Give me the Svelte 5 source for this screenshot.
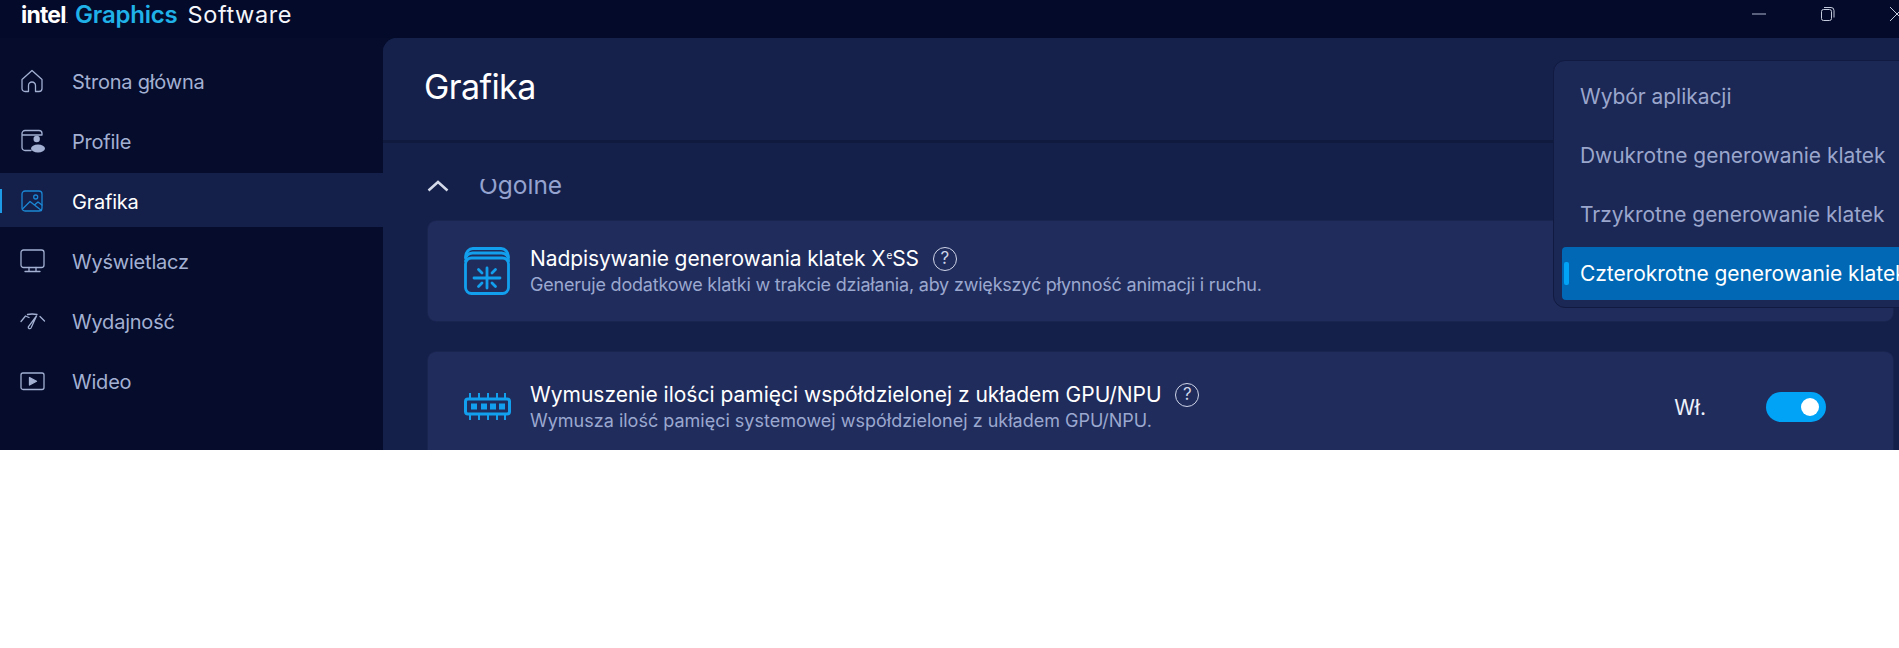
<script>
  const nav = [
    { label: 'Strona główna', icon: 'home' },
    { label: 'Profile', icon: 'profile' },
    { label: 'Grafika', icon: 'image', active: true },
    { label: 'Wyświetlacz', icon: 'monitor' },
    { label: 'Wydajność', icon: 'gauge' },
    { label: 'Wideo', icon: 'video' }
  ];
  const menu = ['Wybór aplikacji', 'Dwukrotne generowanie klatek', 'Trzykrotne generowanie klatek', 'Czterokrotne generowanie klatek'];
</script>

<div class="app">
  <header class="titlebar">
    <div class="brand">
      <span class="intel">intel</span><sup class="tm">.</sup>
      <span class="graphics">Graphics</span>
      <span class="software">Software</span>
    </div>
    <div class="winctl">
      <svg width="16" height="16" viewBox="0 0 16 16"><path d="M1 8h14" stroke="#aeb6cc" stroke-width="1"/></svg>
      <svg width="16" height="16" viewBox="0 0 16 16" fill="none" stroke="#c4cbdc" stroke-width="1"><rect x="1.5" y="3.5" width="10" height="11" rx="2"/><path d="M4 1.500h7a3 3 0 0 1 3 3v7"/></svg>
      <svg width="16" height="16" viewBox="0 0 16 16" fill="none" stroke="#c4cbdc" stroke-width="1"><path d="M1 1l14 14M15 1L1 15"/></svg>
    </div>
  </header>

  <div class="body">
    <nav class="sidebar">
      {#each nav as item}
        <div class="item" class:active={item.active}>
          <svg class="nicon" width="24" height="24" viewBox="0 0 24 24" fill="none" stroke="currentColor" stroke-width="1.3" stroke-linejoin="round" stroke-linecap="round">
            {#if item.icon === 'home'}
              <path d="M2 10.500 12 1.500l10 9v9a3 3 0 0 1-3 3h-3.500v-6a3.500 3.500 0 0 0-7 0v6H5a3 3 0 0 1-3-3z"/>
            {:else if item.icon === 'profile'}
              <path d="M11 21.500H5a3 3 0 0 1-3-3V4.500a3 3 0 0 1 3-3h14a3 3 0 0 1 3 3v1.500M2 6h20"/>
              <circle cx="16.700" cy="10" r="3.200" fill="currentColor" stroke="none"/>
              <ellipse cx="18" cy="19.500" rx="7" ry="4" fill="currentColor" stroke="none"/>
            {:else if item.icon === 'image'}
              <rect x="2" y="2" width="20" height="20" rx="3"/>
              <circle cx="15.700" cy="8" r="2"/>
              <path d="M2.500 20 10 12.500 21.500 21.500M15 15.500l3-2.500 4 3"/>
            {:else if item.icon === 'monitor'}
              <rect x="1" y="1" width="23" height="17.500" rx="2.500"/>
              <path d="M9 18.500v4M16 18.500v4M5 22.500h15"/>
            {:else if item.icon === 'gauge'}
              <path d="M1 12.500 5.500 7 9 8.500M7.500 5.500Q12 4.500 17 5.500M20 7.500l4.500 4.500"/>
              <path d="M16.500 7 11 19a1.500 1.500 0 0 1-2.700-1.200z"/>
            {:else}
              <rect x="1" y="4" width="23" height="16.500" rx="2"/>
              <path d="M9.500 8.500v7.500l7-3.750z" fill="currentColor"/>
            {/if}
          </svg>
          <span>{item.label}</span>
        </div>
      {/each}
    </nav>

    <main class="main">
      <div class="pagehead"><h1>Grafika</h1></div>
      <div class="content">
        <div class="section">
          <svg width="22" height="12" viewBox="0 0 22 12" fill="none" stroke="#d5daea" stroke-width="2.500"><path d="M1.500 10.500 11 2l9.500 8.500"/></svg>
          <div class="clip"><span>Ogólne</span></div>
        </div>
        <section class="card first">
          <svg class="cicon" width="48" height="48" viewBox="0 0 48 48" fill="none" stroke="#12a0ee" stroke-width="2.800" stroke-linecap="round">
            <rect x="1.500" y="11" width="43" height="35.500" rx="6"/>
            <path d="M1.500 11C1.500 5 5 1.500 9 1.500H37c4 0 7.500 3.500 7.500 9.500M1.500 14c0-5 3-8 7-8h29c4 0 7 3 7 8"/>
            <path d="M10 31h26M23 21v20M14.500 22.500 18 26M31.500 22.500 28 26M14.500 39.500 18 36M31.500 39.500 28 36"/>
          </svg>
          <div class="ctext">
            <div class="ctitle">Nadpisywanie generowania klatek X<sup>e</sup>SS <span class="help">?</span></div>
            <div class="csub">Generuje dodatkowe klatki w trakcie działania, aby zwiększyć płynność animacji i ruchu.</div>
          </div>
        </section>
        <section class="card second">
          <svg class="cicon ram" width="48" height="32" viewBox="0 0 48 32" fill="none" stroke="#12a0ee" stroke-width="2">
            <rect x="1.500" y="9" width="44" height="15" rx="2.500" stroke-width="3"/>
            <path d="M6 3v6M15 3v6M24 3v6M33 3v6M41 3v6M6 24v6M15 24v6M24 24v6M33 24v6M41 24v6"/>
            <path d="M7 13.500h6v6H7zM17 13.500h6v6h-6zM26 13.500h6v6h-6zM35 13.500h6v6h-6z" fill="#12a0ee" stroke="none"/>
          </svg>
          <div class="ctext">
            <div class="ctitle">Wymuszenie ilości pamięci współdzielonej z układem GPU/NPU <span class="help">?</span></div>
            <div class="csub">Wymusza ilość pamięci systemowej współdzielonej z układem GPU/NPU.</div>
          </div>
          <span class="state">Wł.</span>
          <span class="toggle"><i></i></span>
        </section>
      </div>

      <div class="dropdown">
        {#each menu as m, i}
          <div class="mitem" class:sel={i === 3}>{m}</div>
        {/each}
      </div>
    </main>
  </div>
</div>

<style>
  :global(body) { margin: 0; background: #fff; }
  .app {
    width: 1899px; height: 450px; overflow: hidden;
    display: flex; flex-direction: column;
    background: #050c2c;
    font-family: Inter, "Noto Sans", sans-serif;
    color: #fff;
  }
  .titlebar {
    height: 38px; flex: none; display: flex; align-items: center; justify-content: space-between;
    background: #040a2a;
  }
  .brand { display: flex; align-items: baseline; padding-left: 21px; margin-top: -10px; }
  .intel { font-weight: 700; font-size: 23px; letter-spacing: -0.8px; }
  .tm { font-size: 8px; margin-right: 7px; }
  .graphics { color: #1fb1e8; font-weight: 600; font-size: 24px; letter-spacing: -0.2px; margin-right: 10px; }
  .software { font-weight: 400; font-size: 23.500px; letter-spacing: 0.6px; color: #f4f6fb; }
  .winctl { display: flex; gap: 53px; margin-right: -6px; margin-top: -10px; }
  .body { flex: 1; display: flex; min-height: 0; }
  .sidebar { width: 383px; flex: none; padding-top: 14px; box-sizing: border-box; }
  .item {
    position: relative; height: 60px; display: flex; align-items: center; gap: 28px;
    padding-left: 20px; color: #a3b0d2; font-size: 20px; letter-spacing: -0.22px; box-sizing: border-box;
  }
  .nicon { flex: none; margin-top: -3px; overflow: visible; }
  .item.active { background: #14204a; color: #fff; height: 54px; margin: 1px 0 5px; padding-top: 4px; }
  .item.active .nicon { color: #1b86d4; }
  .item.active::before {
    content: ""; position: absolute; left: 0; top: 16px; width: 2px; height: 24px; background: #1d9be6;
  }
  .main {
    flex: 1; position: relative; min-width: 0; background: #14204a;
    border-radius: 14px 0 0 0;
  }
  .pagehead {
    height: 105px; box-sizing: border-box; display: flex; align-items: center; padding-left: 41px;
    background: #15214b; border-bottom: 3px solid #101a3f; border-radius: 14px 0 0 0;
  }
  h1 { margin: -5px 0 0; font-size: 34px; font-weight: 400; letter-spacing: -0.6px; }
  .content { padding: 0 6px 0 45px; }
  .section { height: 78px; display: flex; align-items: flex-start; gap: 30px; padding-top: 36px; box-sizing: border-box; color: #94a3cf; font-size: 24.500px; }
  .section svg { margin-top: 1px; margin-left: -1px; }
  .clip { height: 23px; line-height: 28px; overflow: hidden; }
  .clip span { display: block; margin-top: -8px; }
  .card {
    display: flex; align-items: center; background: #202c5c; border-radius: 8px;
    padding-left: 36px; box-sizing: border-box; box-shadow: 0 0 0 1px #19244f;
  }
  .first { height: 100px; margin-bottom: 31px; }
  .second { height: 110px; }
  .cicon { flex: none; margin-right: 18px; }
  .ram { margin-top: -3px; }
  .ctext { flex: 1; min-width: 0; padding-top: 1px; }
  .ctitle { font-size: 21px; font-weight: 400; letter-spacing: 0; line-height: 27px; display: flex; align-items: center; white-space: pre; }
  .ctitle sup { font-size: 10px; line-height: 1; margin-top: -8px; margin-left: 1px; }
  .first .ctitle { letter-spacing: -0.1px; }
  .help { display: inline-flex; width: 24px; height: 24px; margin-left: 8px; border: 1px solid #cfd5e8; border-radius: 50%; align-items: center; justify-content: center; font-size: 17px; font-weight: 400; color: #cfd5e8; box-sizing: border-box; }
  .csub { font-size: 18px; color: #9ba8cf; letter-spacing: -0.2px; line-height: 26px; }
  .second .csub { letter-spacing: 0; }
  .state { font-size: 21px; font-weight: 400; color: #eef1fa; margin-right: 60px; }
  .toggle { width: 60px; height: 30px; border-radius: 15px; background: #00a3f6; display: flex; align-items: center; justify-content: flex-end; padding-right: 7px; box-sizing: border-box; margin-right: 67px; }
  .toggle i { width: 18px; height: 18px; border-radius: 50%; background: #fff; }
  .dropdown {
    position: absolute; left: 1170px; top: 22px; width: 400px; height: 248px;
    background: #1b2754; border: 1px solid #111a40; border-radius: 12px; box-sizing: border-box;
    padding: 9px 8px 8px; display: flex; flex-direction: column; gap: 6px;
  }
  .mitem { height: 53px; flex: none; display: flex; align-items: center; padding-left: 18px; color: #9aa6cc; font-size: 21px; letter-spacing: -0.05px; white-space: nowrap; position: relative; border-radius: 4px; }
  .mitem.sel { background: #0068b5; color: #fff; }
  .mitem.sel::before { content: ""; position: absolute; left: 2px; top: 15px; width: 5px; height: 23px; background: #00a3f6; border-radius: 2px; }
</style>
